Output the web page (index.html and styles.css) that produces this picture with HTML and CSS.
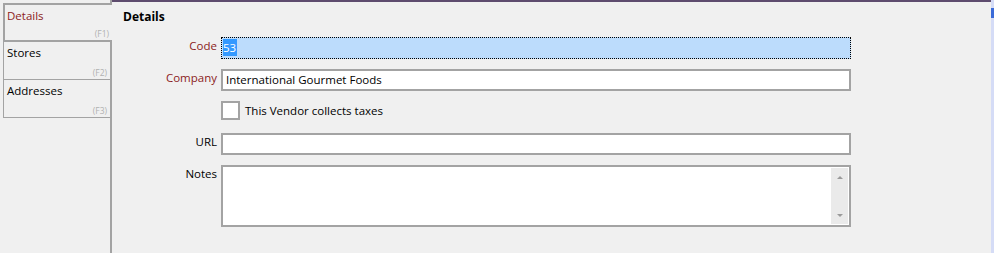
FILE: index.html
```html
<!doctype html>
<html>
<head>
	<title>Vendor</title>
	<meta charset="utf-8"/>
	<link rel="stylesheet" href="styles.css">
</head>
<body>
	<div class="page">
		<div class="tabs">
			<div class="tab selected">
				<span class="tabName">Details</span>
				<span class="key">(F1)</span>
			</div>
			<div class="tab">
				<span class="tabName">Stores</span>
				<span class="key">(F2)</span>
			</div>
			<div class="tab">
				<span class="tabName">Addresses</span>
				<span class="key">(F3)</span>
			</div>
		</div>

		<div class="main">
			<h1>Details</h1>
			<div class="form">
				<label class="required">Code</label>
				<div class="field focused"><span class="sel">53</span></div>

				<label class="required">Company</label>
				<div class="field">International Gourmet Foods</div>

				<span></span>
				<div class="check">
					<span class="box"></span>
					<span>This Vendor collects taxes</span>
				</div>

				<label>URL</label>
				<div class="field"></div>

				<label>Notes</label>
				<div class="field notes">
					<div class="noteText"></div>
					<div class="scroll">
						<span class="up"></span>
						<span class="down"></span>
					</div>
				</div>
			</div>
		</div>

		<div class="edge"><span class="mark"></span></div>
	</div>
</body>
</html>
```

FILE: styles.css
```css
* {
    margin: 0;
    box-sizing: border-box;
}

body {
    background-color: #f0f0f0;
    font-family: "Open Sans", "Noto Sans", Arial, sans-serif;
    font-size: 11.5px;
    color: #000;
}

.page {
    display: flex;
    height: 253px;
}

.tabs {
    width: 112px;
    padding-top: 3px;
    border-right: 2px solid #a3a3a3;
    display: flex;
    flex-direction: column;
}

.tab {
    height: 38px;
    margin-left: 3px;
    padding: 3px 3px 0 3px;
    border-left: 1px solid #a3a3a3;
    border-bottom: 1px solid #a3a3a3;
    display: flex;
    flex-direction: column;
    justify-content: space-between;
}

.tab.selected {
    height: 39px;
    margin-right: -2px;
    border-top: 2px solid #a3a3a3;
    border-left: 2px solid #a3a3a3;
    border-bottom: 2px solid #a3a3a3;
    background-color: #f0f0f0;
    padding-left: 2px;
}

.tab.selected .tabName {
    color: #8c1c1c;
}

.tabName {
    line-height: 16px;
}

.key {
    align-self: flex-end;
    font-size: 8.5px;
    color: #b0b0b0;
    line-height: 12px;
}

.main {
    flex: 1;
    border-top: 2px solid #5e4c6e;
    padding: 7px 0 0 11px;
}

h1 {
    font-size: 12px;
    font-weight: 700;
    line-height: 16px;
    margin-bottom: 12px;
}

.form {
    display: grid;
    grid-template-columns: 94px 630px;
    grid-auto-rows: 22px;
    column-gap: 4px;
    row-gap: 10px;
}

label {
    text-align: right;
    line-height: 16px;
    padding-top: 1px;
}

label.required {
    color: #8c1c1c;
}

.field {
    background-color: #fff;
    border: 2px solid #a3a3a3;
    padding: 0 0 0 3px;
    line-height: 18px;
}

.field.focused {
    background-color: #bcdcfc;
    border: 1px dotted #000;
    padding: 1px 0 0 1px;
}

.sel {
    display: inline-block;
    background-color: #3399ff;
    color: #fff;
    line-height: 17px;
    padding-right: 1px;
}

.check {
    display: flex;
    align-items: center;
    gap: 5px;
    height: 19px;
}

.check .box {
    width: 19px;
    height: 19px;
    background-color: #fff;
    border: 2px solid #a3a3a3;
}

.notes {
    grid-row: span 2;
    height: 62px;
    display: flex;
    padding: 0;
}

.noteText {
    flex: 1;
}

.scroll {
    width: 17px;
    margin: 1px 1px 1px 0;
    background-color: #eaeaea;
    display: flex;
    flex-direction: column;
    justify-content: space-between;
    align-items: center;
    padding: 8px 0 7px;
}

.up {
    border-left: 3px solid transparent;
    border-right: 3px solid transparent;
    border-bottom: 3px solid #9a9a9a;
}

.down {
    border-left: 3px solid transparent;
    border-right: 3px solid transparent;
    border-top: 3px solid #9a9a9a;
}

.edge {
    width: 3px;
    background-color: #d5dcf6;
    padding-top: 8px;
}

.mark {
    display: block;
    height: 10px;
    background-color: #3b6bd8;
}
```
